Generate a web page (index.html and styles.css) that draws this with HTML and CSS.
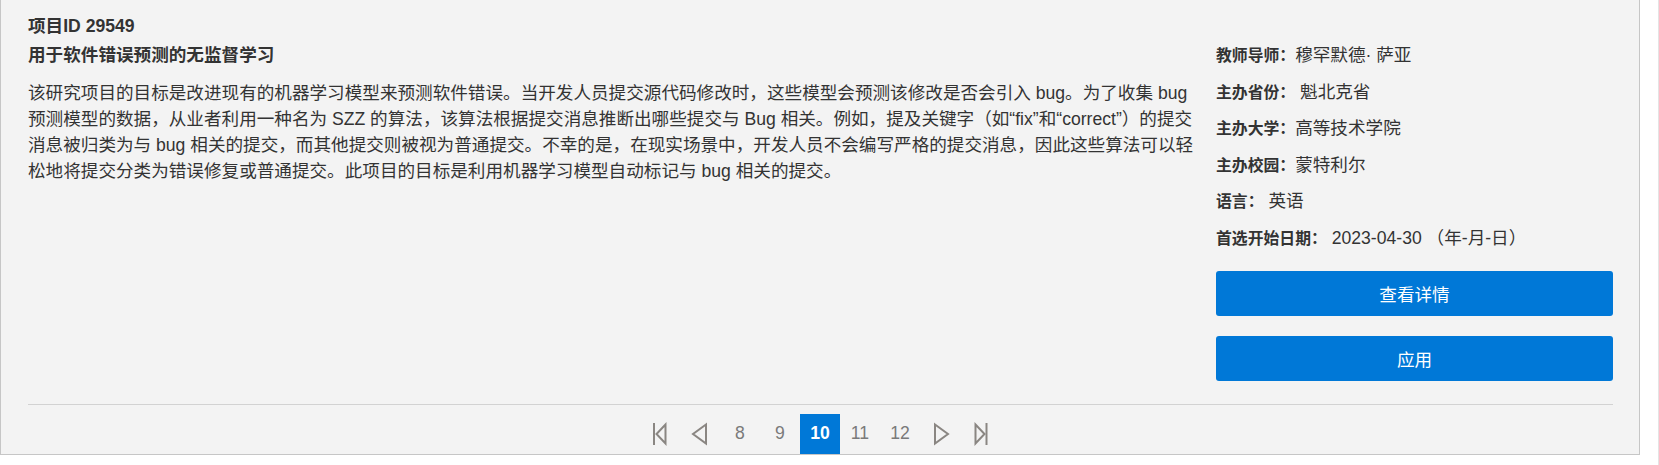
FILE: index.html
```html
<!DOCTYPE html>
<html lang="zh-CN">
<head>
<meta charset="utf-8">
<title>项目ID 29549</title>
<link rel="stylesheet" href="styles.css">
</head>
<body>
<div class="page">
  <section class="card">
    <div class="project-id">项目ID 29549</div>
    <div class="card-body">
      <div class="main-col">
        <h2 class="title">用于软件错误预测的无监督学习</h2>
        <p class="desc">该研究项目的目标是改进现有的机器学习模型来预测软件错误。当开发人员提交源代码修改时，这些模型会预测该修改是否会引入 bug。为了收集 bug 预测模型的数据，从业者利用一种名为 SZZ 的算法，该算法根据提交消息推断出哪些提交与 Bug 相关。例如，提及关键字（如“fix”和“correct”）的提交消息被归类为与 bug 相关的提交，而其他提交则被视为普通提交。不幸的是，在现实场景中，开发人员不会编写严格的提交消息，因此这些算法可以轻松地将提交分类为错误修复或普通提交。此项目的目标是利用机器学习模型自动标记与 bug 相关的提交。</p>
      </div>
      <aside class="side-col">
        <ul class="info">
          <li><strong>教师导师：</strong>穆罕默德· 萨亚</li>
          <li><strong>主办省份：</strong> 魁北克省</li>
          <li><strong>主办大学：</strong>高等技术学院</li>
          <li><strong>主办校园：</strong>蒙特利尔</li>
          <li><strong>语言：</strong> 英语</li>
          <li><strong>首选开始日期：</strong> 2023-04-30 （年-月-日）</li>
        </ul>
        <a class="btn" href="#">查看详情</a>
        <a class="btn" href="#">应用</a>
      </aside>
    </div>
    <hr class="divider">
    <nav class="pager">
      <a class="pg icon" href="#" aria-label="第一页"><svg viewBox="0 0 40 40" width="40" height="40"><line x1="14" y1="9" x2="14" y2="31"/><path d="M25.5 10.5 L16.5 20 L25.5 29.5 Z"/></svg></a>
      <a class="pg icon" href="#" aria-label="上一页"><svg viewBox="0 0 40 40" width="40" height="40"><path d="M26 10.5 L13 20 L26 29.5 Z"/></svg></a>
      <a class="pg" href="#">8</a>
      <a class="pg" href="#">9</a>
      <a class="pg active" href="#">10</a>
      <a class="pg" href="#">11</a>
      <a class="pg" href="#">12</a>
      <a class="pg icon" href="#" aria-label="下一页"><svg viewBox="0 0 40 40" width="40" height="40"><path d="M15 10.5 L28 20 L15 29.5 Z"/></svg></a>
      <a class="pg icon" href="#" aria-label="最后一页"><svg viewBox="0 0 40 40" width="40" height="40"><path d="M15.5 10.5 L24.5 20 L15.5 29.5 Z"/><line x1="26.5" y1="9" x2="26.5" y2="31"/></svg></a>
    </nav>
  </section>
</div>
</body>
</html>
```

FILE: styles.css
```css
* { box-sizing: border-box; }

html, body {
  margin: 0;
  padding: 0;
  background: #ffffff;
}

body {
  font-family: "Liberation Sans", "Noto Sans CJK SC", sans-serif;
  color: #333333;
  font-size: 17.6px;
}

.page {
  width: 1659px;
  min-height: 465px;
  border-right: 1px solid #e4e4e4;
}

.card {
  width: 1640px;
  background: #f3f3f3;
  border: 1px solid #c6c6c6;
  border-top: none;
  padding: 13px 26px 0 27px;
}

.project-id {
  font-weight: bold;
  font-size: 17.6px;
  line-height: 26px;
  margin-bottom: 3px;
}

.card-body {
  display: grid;
  grid-template-columns: 1fr 397px;
  column-gap: 18px;
}

.title {
  margin: 0;
  font-size: 17.6px;
  font-weight: bold;
  line-height: 26px;
}

.desc {
  margin: 11.5px 0 0;
  font-size: 17.6px;
  line-height: 26px;
}

.side-col {
  display: flex;
  flex-direction: column;
}

.info {
  list-style: none;
  margin: 0 0 20px;
  padding: 0;
  display: flex;
  flex-direction: column;
  gap: 10.6px;
}

.info li {
  height: 26px;
  line-height: 26px;
  font-size: 17.6px;
  white-space: nowrap;
}

.info strong {
  font-size: 15.84px;
  line-height: 1;
}

.btn {
  display: flex;
  align-items: center;
  justify-content: center;
  height: 45px;
  background: #0078d7;
  color: #ffffff;
  border-radius: 3px;
  text-decoration: none;
  font-size: 17.6px;
}

.btn + .btn {
  margin-top: 20px;
}

.divider {
  margin: 23px 0 0;
  border: none;
  border-top: 1px solid #d2d2d2;
  height: 0;
}

.pager {
  display: flex;
  justify-content: center;
  margin-top: 9px;
  margin-left: -1px;
}

.pg {
  width: 40px;
  height: 40px;
  display: flex;
  align-items: center;
  justify-content: center;
  color: #7a7a7a;
  text-decoration: none;
  font-size: 17.6px;
}

.pg.active {
  background: #0078d7;
  color: #ffffff;
  font-weight: bold;
}

.pg svg {
  display: block;
  fill: none;
  stroke: #8a8682;
  stroke-width: 2;
}
```
